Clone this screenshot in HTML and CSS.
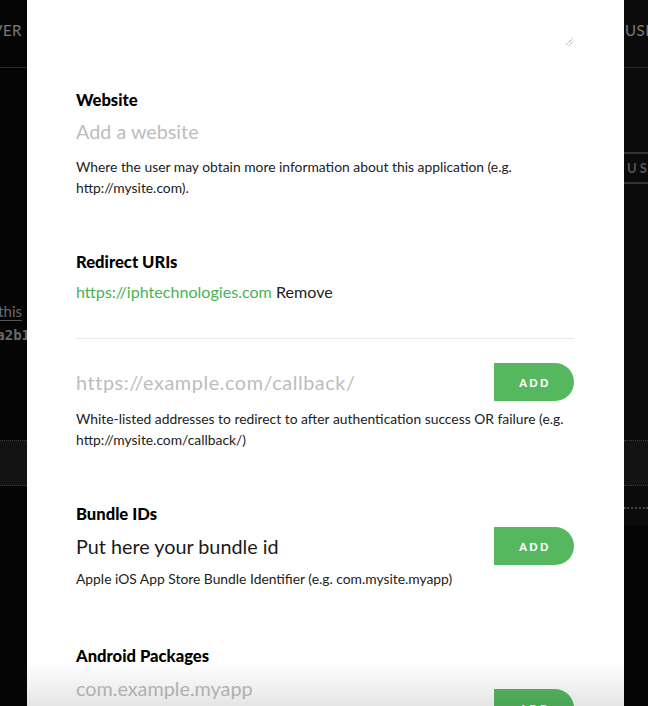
FILE: index.html
```html
<!DOCTYPE html>
<html>
<head>
<meta charset="utf-8">
<link rel="stylesheet" href="styles.css">
</head>
<body>
<div class="bg">
  <div class="bg-row bg-head">
    <div class="bg-left"><span class="nav-text">VER</span></div>
    <div class="bg-right"><span class="nav-text">USE</span></div>
  </div>
  <div class="bg-row bg-btnrow">
    <div class="bg-left"></div>
    <div class="bg-right"><span class="ghost-btn">USE</span></div>
  </div>
  <div class="bg-row bg-links">
    <div class="bg-left col">
      <span class="bg-link">this</span>
      <span class="bg-code">a2b1</span>
    </div>
    <div class="bg-right"></div>
  </div>
  <div class="bg-row bg-boxes">
    <div class="bg-left"><div class="bg-box"></div></div>
    <div class="bg-right"><div class="bg-box"></div></div>
  </div>
  <div class="bg-row bg-dots">
    <div class="bg-left"></div>
    <div class="bg-right"><div class="dotline"></div></div>
  </div>
</div>

<div class="modal">
  <div class="textarea-end">
    <svg class="grip" width="8" height="8" viewBox="0 0 8 8"><path d="M7.5 0.5 L0.5 7.5 M7.5 4 L4 7.5" stroke="#777" stroke-width="1" stroke-dasharray="1 1" fill="none"/></svg>
  </div>

  <section class="field first">
    <h3 class="label">Website</h3>
    <div class="input placeholder">Add a website</div>
    <p class="help">Where the user may obtain more information about this application (e.g. http://mysite.com).</p>
  </section>

  <section class="field">
    <h3 class="label">Redirect URIs</h3>
    <div class="uri"><a class="uri-link">https://iphtechnologies.com</a> <span class="remove">Remove</span></div>
    <hr class="sep">
    <div class="addrow">
      <div class="input placeholder wide">https://example.com/callback/</div>
      <button class="add">ADD</button>
    </div>
    <p class="help tight">White-listed addresses to redirect to after authentication success OR failure (e.g. http://mysite.com/callback/)</p>
  </section>

  <section class="field">
    <h3 class="label">Bundle IDs</h3>
    <div class="addrow close">
      <div class="input value">Put here your bundle id</div>
      <button class="add">ADD</button>
    </div>
    <p class="help close">Apple iOS App Store Bundle Identifier (e.g. com.mysite.myapp)</p>
  </section>

  <section class="field android">
    <h3 class="label">Android Packages</h3>
    <div class="addrow late">
      <div class="input placeholder">com.example.myapp</div>
      <button class="add drop">ADD</button>
    </div>
  </section>
  <div class="fade"></div>
</div>
</body>
</html>
```
FILE: styles.css
```css
html, body {
  margin: 0;
  padding: 0;
  background: #050505;
  height: 706px;
  overflow: hidden;
  font-family: "Lato", "Helvetica Neue", Arial, sans-serif;
}

/* background page */
.bg {
  display: flex;
  flex-direction: column;
  width: 648px;
}
.bg-row {
  display: flex;
  justify-content: space-between;
  overflow: hidden;
}
.bg-left {
  width: 27px;
  display: flex;
  justify-content: flex-end;
  align-items: flex-start;
  overflow: hidden;
}
.bg-left.col {
  flex-direction: column;
  justify-content: flex-start;
  align-items: flex-end;
}
.bg-right {
  width: 24px;
  display: flex;
  justify-content: flex-start;
  align-items: flex-start;
  overflow: hidden;
  background: #0b0b0b;
}
.bg-head {
  height: 67px;
  border-bottom: 1px solid #2a2a2a;
}
.nav-text {
  color: #7a7a7a;
  font-size: 15px;
  line-height: 20px;
  letter-spacing: 0.5px;
  white-space: nowrap;
  margin-top: 20px;
}
.bg-left .nav-text { margin-right: 5px; }
.bg-right .nav-text { margin-left: 1px; }
.bg-btnrow { height: 150px; }
.ghost-btn {
  display: block;
  white-space: nowrap;
  border-top: 2px solid #333;
  border-bottom: 2px solid #333;
  color: #555;
  font-size: 13px;
  font-weight: 700;
  letter-spacing: 3px;
  padding: 6px 0 6px 3px;
  line-height: 16px;
  margin-top: 84px;
}
.bg-links { height: 222px; }
.bg-link {
  margin-top: 84px;
  color: #6a6a6a;
  font-size: 15px;
  border-bottom: 1px solid #555;
  line-height: 18px;
  white-space: nowrap;
  margin-right: 5px;
}
.bg-code {
  margin-top: 6px;
  color: #6a6a6a;
  font-size: 14px;
  font-weight: 700;
  white-space: nowrap;
  font-family: "DejaVu Sans Mono", monospace;
  margin-right: -3px;
}
.bg-boxes { height: 46px; }
.bg-box {
  width: 100%;
  height: 44px;
  background: #131313;
  border-top: 1px dotted #3a3a3a;
  border-bottom: 1px dotted #3a3a3a;
}
.bg-dots { height: 40px; }
.dotline {
  width: 100%;
  height: 3px;
  margin-top: 21px;
  border-top: 2px dotted #444;
}

/* modal */
.modal {
  position: absolute;
  top: 0;
  left: 27px;
  width: 597px;
  height: 706px;
  background: #fff;
  box-sizing: border-box;
  padding: 0 50px 0 49px;
  overflow: hidden;
}
.textarea-end {
  height: 48px;
  display: flex;
  justify-content: flex-end;
  align-items: flex-start;
}
.grip { margin-top: 38px; margin-right: 1px; }

.field { margin-top: 54px; }
.field.first { margin-top: 42px; }
.field.android { margin-top: 57px; }
.label {
  margin: 0;
  font-size: 16.6px;
  line-height: 20px;
  font-weight: 900;
  color: #000;
}
.input {
  font-size: 19.8px;
  line-height: 24px;
  margin-top: 9px;
  white-space: nowrap;
  flex: 1;
}
.input.wide { letter-spacing: 0.6px; }
.placeholder { color: #bdbdbd; }
.value { color: #1a1a1a; }
.help {
  margin: 13px 0 0;
  font-size: 13.85px;
  line-height: 21px;
  color: #222;
}
.help.tight { margin-top: 7px; }
.help.close { margin-top: 3px; }
.uri {
  margin-top: 10px;
  font-size: 16.1px;
  line-height: 20px;
  color: #222;
}
.uri-link { color: #48b356; }
.sep {
  border: 0;
  border-top: 1px solid #e8e8e8;
  margin: 36px 0 0;
}
.addrow {
  display: flex;
  align-items: center;
  margin-top: 24px;
}
.addrow .input { margin-top: 0; }
.addrow.close { margin-top: 3px; }
.addrow.late { margin-top: 10px; align-items: flex-start; }
.add {
  width: 80px;
  height: 38px;
  border: 0;
  border-radius: 0 19px 19px 0;
  background: #55b85e;
  color: #fff;
  font-family: "Lato", Arial, sans-serif;
  font-weight: 900;
  font-size: 11px;
  letter-spacing: 2.4px;
  padding: 0 0 0 2px;
  flex: none;
}
.add.drop { margin-top: 13px; }
.fade {
  position: absolute;
  left: 0;
  right: 0;
  bottom: 0;
  height: 44px;
  background: linear-gradient(to bottom, rgba(0,0,0,0), rgba(0,0,0,0.1));
  pointer-events: none;
}
```
